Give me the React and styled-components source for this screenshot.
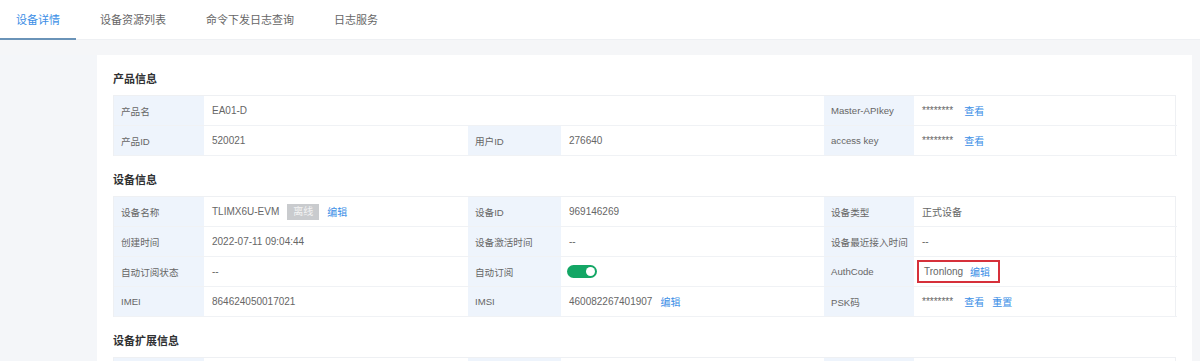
import React from "react";
import styled, { createGlobalStyle } from "styled-components";

const GlobalStyle = createGlobalStyle`
  html, body {
    margin: 0;
    padding: 0;
    background: #f5f6f8;
    font-family: "Liberation Sans", "Noto Sans CJK SC", sans-serif;
    font-size: 12px;
    color: #666;
  }
`;

const Page = styled.div`
  width: 1200px;
  height: 361px;
  overflow: hidden;
  background: #f5f6f8;
`;

const TabBar = styled.div`
  display: flex;
  height: 40px;
  background: #fff;
  border-bottom: 1px solid #eef0f3;
  box-sizing: border-box;
`;

const Tab = styled.div`
  display: flex;
  align-items: center;
  padding: 0 16px 0 16px;
  margin-right: 8px;
  height: 40px;
  box-sizing: border-box;
  font-size: 11px;
  color: ${(p) => (p.$active ? "#3a8ee6" : "#666")};
  border-bottom: 2px solid ${(p) => (p.$active ? "#6a93b8" : "transparent")};
`;

const Body = styled.div`
  display: flex;
  padding-top: 15px;
`;

const Aside = styled.div`
  width: 97px;
  flex-shrink: 0;
  background: #f4f6f9;
  height: 320px;
`;

const Card = styled.div`
  background: #fff;
  padding: 0 16px 20px 16px;
  width: 1095px;
  box-sizing: border-box;
`;

const SectionTitle = styled.div`
  font-size: 11px;
  font-weight: bold;
  color: #303133;
  line-height: 20px;
  padding: 14px 0 6px;
`;

const Table = styled.div`
  display: grid;
  grid-template-columns: 90px 264px 93px 263px 90px 263px;
  border: 1px solid #eef0f3;
  border-bottom: none;
`;

const Label = styled.div`
  background: #eef4fc;
  height: 30px;
  box-sizing: border-box;
  display: flex;
  align-items: center;
  padding-left: 7px;
  border-bottom: 1px solid #f0f2f5;
  color: #666;
  font-size: 9.6px;
  white-space: nowrap;
`;

const Value = styled.div`
  grid-column: span ${(p) => p.$span || 1};
  height: 30px;
  box-sizing: border-box;
  display: flex;
  align-items: center;
  padding-left: 8px;
  border-bottom: 1px solid #f0f2f5;
  color: #666;
  font-size: 10px;
  gap: 8px;
`;

const Link = styled.span`
  color: #3a8ee6;
`;

const StatusTag = styled.span`
  background: #c9cbce;
  color: #f4f4f4;
  padding: 0 6px;
  height: 16px;
  line-height: 16px;
  font-size: 10px;
`;

const Toggle = styled.span`
  position: relative;
  display: inline-block;
  width: 30px;
  height: 13px;
  border-radius: 7px;
  background: #13a665;
  margin-left: -2px;

  &::after {
    content: "";
    position: absolute;
    right: 2px;
    top: 2px;
    width: 9px;
    height: 9px;
    border-radius: 50%;
    background: #fff;
  }
`;

const Highlight = styled.span`
  display: inline-flex;
  align-items: center;
  gap: 7px;
  border: 2px solid #d6303a;
  margin-left: -5px;
  padding: 0 8px 0 5px;
  height: 19px;
`;

const Stars = styled.span`
  margin-right: 3px;
`;

export default function App() {
  return (
    <Page>
      <GlobalStyle />
      <TabBar>
        <Tab $active>设备详情</Tab>
        <Tab>设备资源列表</Tab>
        <Tab>命令下发日志查询</Tab>
        <Tab>日志服务</Tab>
      </TabBar>
      <Body>
        <Aside />
        <Card>
          <SectionTitle>产品信息</SectionTitle>
          <Table>
            <Label>产品名</Label>
            <Value $span={3}>EA01-D</Value>
            <Label>Master-APIkey</Label>
            <Value>
              <Stars>********</Stars>
              <Link>查看</Link>
            </Value>
            <Label>产品ID</Label>
            <Value>520021</Value>
            <Label>用户ID</Label>
            <Value>276640</Value>
            <Label>access key</Label>
            <Value>
              <Stars>********</Stars>
              <Link>查看</Link>
            </Value>
          </Table>

          <SectionTitle>设备信息</SectionTitle>
          <Table>
            <Label>设备名称</Label>
            <Value>
              TLIMX6U-EVM
              <StatusTag>离线</StatusTag>
              <Link>编辑</Link>
            </Value>
            <Label>设备ID</Label>
            <Value>969146269</Value>
            <Label>设备类型</Label>
            <Value>正式设备</Value>

            <Label>创建时间</Label>
            <Value>2022-07-11 09:04:44</Value>
            <Label>设备激活时间</Label>
            <Value>--</Value>
            <Label>设备最近接入时间</Label>
            <Value>--</Value>

            <Label>自动订阅状态</Label>
            <Value>--</Value>
            <Label>自动订阅</Label>
            <Value>
              <Toggle />
            </Value>
            <Label>AuthCode</Label>
            <Value>
              <Highlight>
                Tronlong
                <Link>编辑</Link>
              </Highlight>
            </Value>

            <Label>IMEI</Label>
            <Value>864624050017021</Value>
            <Label>IMSI</Label>
            <Value>
              460082267401907
              <Link>编辑</Link>
            </Value>
            <Label>PSK码</Label>
            <Value>
              <Stars>********</Stars>
              <Link>查看</Link>
              <Link>重置</Link>
            </Value>
          </Table>

          <SectionTitle>设备扩展信息</SectionTitle>
          <Table>
            <Label />
            <Value />
            <Label />
            <Value />
            <Label />
            <Value />
          </Table>
        </Card>
      </Body>
    </Page>
  );
}
